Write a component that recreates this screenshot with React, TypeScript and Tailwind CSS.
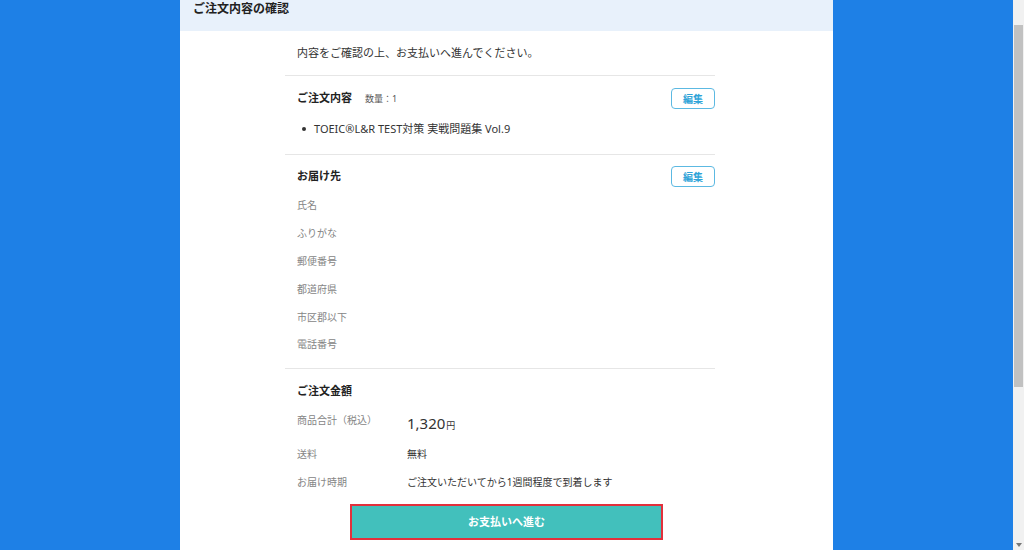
const font = { fontFamily: '"Noto Sans", "Noto Sans CJK JP", sans-serif' };

function EditButton() {
  return (
    <button className="w-[44px] h-[21px] rounded-[4px] border-[1.5px] border-[#5cb9e2] bg-white text-[10px] font-bold text-[#2fa4d8] leading-none">
      編集
    </button>
  );
}

function Label({ children }: { children: React.ReactNode }) {
  return <div className="h-[27.8px] flex items-center text-[10px] text-[#858585]">{children}</div>;
}

export default function App() {
  return (
    <div className="w-[1024px] h-[550px] flex overflow-hidden" style={font}>
      {/* page */}
      <div className="flex-1 bg-[#1e80e6] flex justify-center">
        <div className="w-[653px] h-full bg-white flex flex-col">
          {/* title bar */}
          <div className="h-[31px] shrink-0 bg-[#e8f1fb] px-[13px] pt-px text-[12px] leading-4 font-bold text-[#222]">
            ご注文内容の確認
          </div>

          <div className="ml-[105px] w-[430px] flex flex-col text-[#333]">
            <p className="pt-[14px] pb-[14px] pl-3 text-[11px] leading-4">
              内容をご確認の上、お支払いへ進んでください。
            </p>
            <div className="h-px bg-[#e6e6e6]" />

            {/* order contents */}
            <div className="pt-[12px] pb-[17px]">
              <div className="flex items-center justify-between pl-3 h-[21px]">
                <div className="flex items-center gap-[13px]">
                  <span className="text-[11px] font-bold text-[#222]">ご注文内容</span>
                  <span className="text-[9px] text-[#555]">数量：1</span>
                </div>
                <EditButton />
              </div>
              <div className="mt-[12px] pl-[17px] flex items-center gap-[8px] h-4">
                <span className="w-[4px] h-[4px] rounded-full bg-[#333]" />
                <span className="text-[11px]">TOEIC®L&amp;R TEST対策 実戦問題集 Vol.9</span>
              </div>
            </div>
            <div className="h-px bg-[#e6e6e6]" />

            {/* shipping */}
            <div className="pt-[11px] pb-[9px]">
              <div className="flex items-center justify-between pl-3 h-[21px]">
                <span className="text-[11px] font-bold text-[#222]">お届け先</span>
                <EditButton />
              </div>
              <div className="mt-[5px] pl-3 flex flex-col">
                <Label>氏名</Label>
                <Label>ふりがな</Label>
                <Label>郵便番号</Label>
                <Label>都道府県</Label>
                <Label>市区郡以下</Label>
                <Label>電話番号</Label>
              </div>
            </div>
            <div className="h-px bg-[#e6e6e6]" />

            {/* amount */}
            <div className="pt-[14px] pl-3 flex flex-col">
              <div className="text-[11px] leading-4 font-bold text-[#222]">ご注文金額</div>
              <div className="mt-[13px] flex items-start">
                <span className="w-[110px] text-[10px] leading-4 text-[#858585]">商品合計（税込）</span>
                <span className="leading-[22px] text-[#333]">
                  <span className="text-[15px]">1,320</span>
                  <span className="text-[9px] ml-px">円</span>
                </span>
              </div>
              <div className="mt-[10px] flex items-center h-4">
                <span className="w-[110px] text-[10px] text-[#858585]">送料</span>
                <span className="text-[10px]">無料</span>
              </div>
              <div className="mt-[12px] flex items-center h-4">
                <span className="w-[110px] text-[10px] text-[#858585]">お届け時期</span>
                <span className="text-[10px]">ご注文いただいてから1週間程度で到着します</span>
              </div>
            </div>
          </div>

          <div className="mt-[13px] flex justify-center">
            <button className="w-[313px] h-[36px] border-2 border-[#e2303c] bg-[#42c0bc] text-white text-[11px] font-bold">
              お支払いへ進む
            </button>
          </div>
        </div>
      </div>

      {/* scrollbar */}
      <div className="w-[11px] h-full bg-[#f1f1f1] flex flex-col items-center">
        <div className="mt-[25px] w-[9px] h-[362px] bg-[#c1c1c1]" />
        <div className="flex-1" />
        <div className="mb-[3px] w-0 h-0 border-l-[3px] border-r-[3px] border-t-[4px] border-l-transparent border-r-transparent border-t-[#777]" />
      </div>
    </div>
  );
}
